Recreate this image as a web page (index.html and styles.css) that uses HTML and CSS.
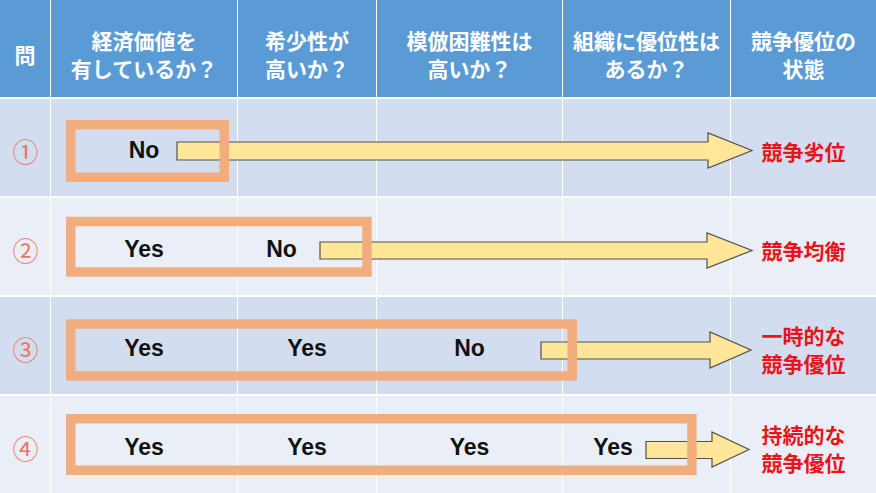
FILE: index.html
```html
<!DOCTYPE html>
<html lang="ja">
<head>
<meta charset="utf-8">
<title>競争優位の状態</title>
<link rel="stylesheet" href="styles.css">
</head>
<body>
<div class="table">
  <div class="row head">
    <div class="cell">問</div>
    <div class="cell">経済価値を<br>有しているか？</div>
    <div class="cell">希少性が<br>高いか？</div>
    <div class="cell">模倣困難性は<br>高いか？</div>
    <div class="cell">組織に優位性は<br>あるか？</div>
    <div class="cell">競争優位の<br>状態</div>
  </div>

  <div class="row dark">
    <div class="cell num">①</div>
    <div class="cell val">No</div>
    <div class="cell"></div>
    <div class="cell"></div>
    <div class="cell"></div>
    <div class="cell result">競争劣位</div>
    <svg class="overlay" viewBox="0 0 876 97" width="876" height="97">
      <polygon class="arrow" points="177,43 708,43 708,34 752,51.5 708,69 708,61 177,61"/>
      <rect class="box" x="70.75" y="25.75" width="153.5" height="52.5"/>
    </svg>
  </div>

  <div class="row light">
    <div class="cell num">②</div>
    <div class="cell val">Yes</div>
    <div class="cell val shift2">No</div>
    <div class="cell"></div>
    <div class="cell"></div>
    <div class="cell result">競争均衡</div>
    <svg class="overlay" viewBox="0 0 876 97" width="876" height="97">
      <polygon class="arrow" points="320,44 707,44 707,35 752,52.5 707,70 707,61 320,61"/>
      <rect class="box" x="70.75" y="23.5" width="296.2" height="50.5"/>
    </svg>
  </div>

  <div class="row dark">
    <div class="cell num">③</div>
    <div class="cell val">Yes</div>
    <div class="cell val">Yes</div>
    <div class="cell val">No</div>
    <div class="cell"></div>
    <div class="cell result">一時的な<br>競争優位</div>
    <svg class="overlay" viewBox="0 0 876 97" width="876" height="97">
      <polygon class="arrow" points="541,45 710,45 710,35 751,53 710,71 710,62 541,62"/>
      <rect class="box" x="70.75" y="27" width="501.5" height="52"/>
    </svg>
  </div>

  <div class="row light">
    <div class="cell num">④</div>
    <div class="cell val">Yes</div>
    <div class="cell val">Yes</div>
    <div class="cell val">Yes</div>
    <div class="cell val shift4">Yes</div>
    <div class="cell result">持続的な<br>競争優位</div>
    <svg class="overlay" viewBox="0 0 876 97" width="876" height="97">
      <polygon class="arrow" points="646,45.5 712,45.5 712,36 749,53.5 712,71 712,62.5 646,62.5"/>
      <rect class="box" x="70.75" y="22.75" width="621.2" height="51.5"/>
    </svg>
  </div>
</div>
</body>
</html>
```

FILE: styles.css
```css
html, body {
  margin: 0;
  padding: 0;
  background: #ffffff;
}

body {
  width: 876px;
  height: 493px;
  overflow: hidden;
  font-family: "Noto Sans CJK JP", "Noto Sans", sans-serif;
}

.table {
  display: flex;
  flex-direction: column;
  gap: 2px;
  background: #ffffff;
}

.row {
  position: relative;
  display: grid;
  grid-template-columns: 50px 186px 138px 185px 167px 145px;
  column-gap: 1px;
  height: 97px;
}

.cell {
  display: flex;
  align-items: center;
  justify-content: center;
  text-align: center;
  box-sizing: border-box;
  padding-top: 5px;
}

.head .cell {
  background: #5b9bd5;
  color: #ffffff;
  font-weight: 700;
  font-size: 21px;
  line-height: 28px;
  padding-top: 10px;
}

.dark .cell {
  background: #d2deef;
}

.light .cell {
  background: #eaeff7;
}

.num {
  color: #eb7562;
  font-size: 26px;
  font-weight: 400;
  padding-left: 1px;
}

.val {
  font-family: "Liberation Sans", Arial, sans-serif;
  font-weight: 700;
  font-size: 23px;
  color: #111111;
}

.shift2 {
  padding-right: 51px;
}

.shift4 {
  padding-right: 67px;
}

.result {
  color: #e8141c;
  font-weight: 700;
  font-size: 21px;
  line-height: 28px;
  padding-top: 6px;
}

.overlay {
  position: absolute;
  left: 0;
  top: 0;
  width: 876px;
  height: 97px;
  pointer-events: none;
}

.arrow {
  fill: #ffe699;
  stroke: #505050;
  stroke-width: 1.2;
  stroke-linejoin: miter;
}

.box {
  fill: none;
  stroke: #f2ad7f;
  stroke-width: 9.5;
}
```
